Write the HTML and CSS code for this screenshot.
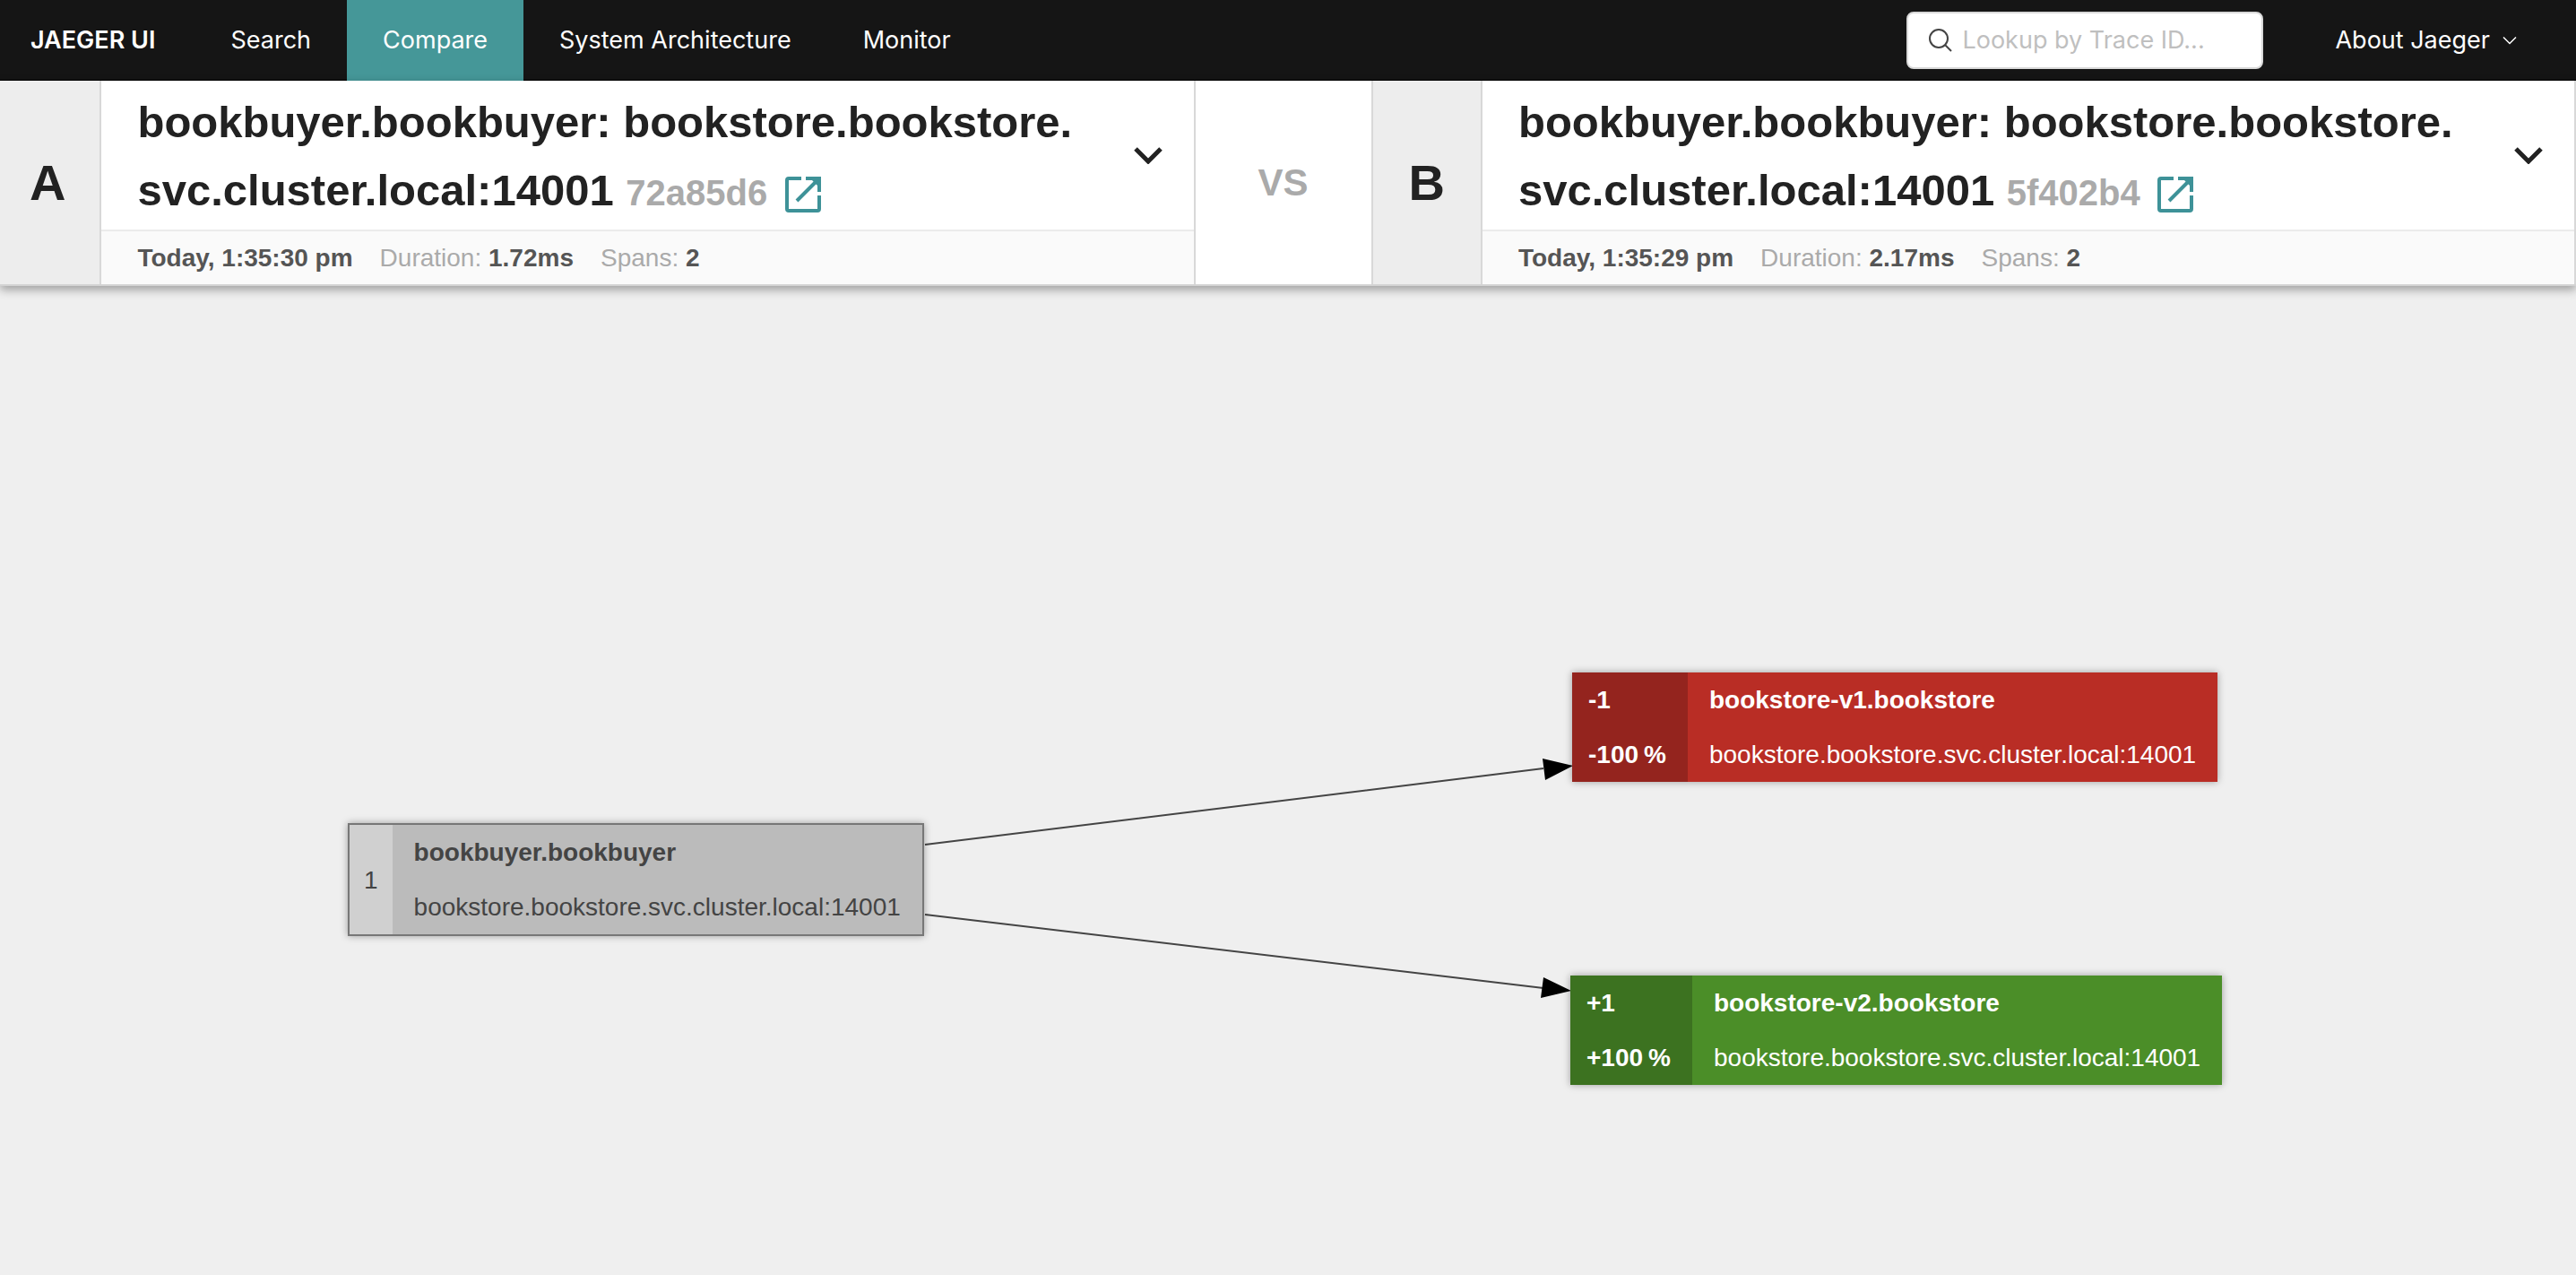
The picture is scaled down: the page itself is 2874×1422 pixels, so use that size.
FILE: index.html
```html
<!DOCTYPE html>
<html lang="en">
<head>
<meta charset="utf-8">
<title>Jaeger UI</title>
<link rel="stylesheet" href="styles.css">
</head>
<body>
<svg class="defs" aria-hidden="true">
  <symbol id="chevron" viewBox="0 0 32 20"><path d="M2 3 16 17 30 3" fill="none" stroke="currentColor"/></symbol>
  <symbol id="open" viewBox="0 0 40 40"><path d="M18 2H4Q2 2 2 4V36Q2 38 4 38H36Q38 38 38 36V21M23 2H38V17M37 3 13 27" fill="none" stroke="currentColor" stroke-width="4"/><path d="M28 2H38V12Z" fill="currentColor"/></symbol>
</svg>
<nav class="nav">
  <a class="nav-item brand" href="#">JAEGER UI</a>
  <a class="nav-item" href="#">Search</a>
  <a class="nav-item active" href="#">Compare</a>
  <a class="nav-item" href="#">System Architecture</a>
  <a class="nav-item" href="#">Monitor</a>
  <label class="lookup">
    <svg class="lookup-icon" viewBox="0 0 28 28" aria-hidden="true"><circle cx="12" cy="12" r="10"/><path d="m19 19 7 7"/></svg>
    <input class="lookup-input" type="text" placeholder="Lookup by Trace ID..." aria-label="Lookup by Trace ID">
  </label>
  <button class="about" type="button">About Jaeger <svg class="about-icon" aria-hidden="true"><use href="#chevron"/></svg></button>
</nav>
<header class="compare">
  <div class="letter">A</div>
  <section class="trace">
    <div class="trace-main">
      <h1 class="title">bookbuyer.bookbuyer: bookstore.bookstore.<wbr>svc.cluster.local:14001 <small class="trace-id">72a85d6</small> <a class="open" href="#" aria-label="Open trace 72a85d6"><svg class="open-icon"><use href="#open"/></svg></a></h1>
      <button class="toggle" type="button" aria-label="Select trace A"><svg class="toggle-icon"><use href="#chevron"/></svg></button>
    </div>
    <div class="meta"><strong>Today, 1:35:30 pm</strong><span>Duration: <strong>1.72ms</strong></span><span>Spans: <strong>2</strong></span></div>
  </section>
  <div class="vs">VS</div>
  <div class="letter letter-b">B</div>
  <section class="trace">
    <div class="trace-main">
      <h1 class="title">bookbuyer.bookbuyer: bookstore.bookstore.<wbr>svc.cluster.local:14001 <small class="trace-id">5f402b4</small> <a class="open" href="#" aria-label="Open trace 5f402b4"><svg class="open-icon"><use href="#open"/></svg></a></h1>
      <button class="toggle" type="button" aria-label="Select trace B"><svg class="toggle-icon"><use href="#chevron"/></svg></button>
    </div>
    <div class="meta"><strong>Today, 1:35:29 pm</strong><span>Duration: <strong>2.17ms</strong></span><span>Spans: <strong>2</strong></span></div>
  </section>
</header>
<main class="graph">
  <svg class="edges" aria-hidden="true">
    <path class="edge" d="M1032 623 1722 538M1032 701 1722 783"/>
    <path d="M1721 527 1755 535 1724 551ZM1722 771 1753 786 1719 794Z"/>
  </svg>
  <div class="node node-same">
    <div class="count"><span>1</span></div>
    <div class="label"><strong>bookbuyer.bookbuyer</strong><span>bookstore.bookstore.svc.cluster.local:14001</span></div>
  </div>
  <div class="node node-removed">
    <div class="count"><span>-1</span><span>-100<span class="pct">%</span></span></div>
    <div class="label"><strong>bookstore-v1.bookstore</strong><span>bookstore.bookstore.svc.cluster.local:14001</span></div>
  </div>
  <div class="node node-added">
    <div class="count"><span>+1</span><span>+100<span class="pct">%</span></span></div>
    <div class="label"><strong>bookstore-v2.bookstore</strong><span>bookstore.bookstore.svc.cluster.local:14001</span></div>
  </div>
</main>
</body>
</html>
```
FILE: styles.css
```css
* { box-sizing: border-box; }
body {
  margin: 0;
  min-height: 100vh;
  display: flex;
  flex-direction: column;
  background: #efefef;
  color: #222;
  font-family: "Liberation Sans", Arial, sans-serif;
  font-size: 28px;
}
button { border: 0; padding: 0; background: none; color: inherit; font: inherit; }
.defs { display: none; }

.nav {
  display: flex;
  align-items: center;
  height: 90px;
  background: #151515;
  border-bottom: 1px solid #000;
  color: #fff;
  font-family: Inter, sans-serif;
  font-size: 27px;
}
.nav-item {
  display: flex;
  align-items: center;
  height: 90px;
  padding: 0 40px;
  color: #fff;
  text-decoration: none;
}
.brand { padding: 0 44px 0 34px; font-weight: 600; }
.active { background: #459798; }
.lookup {
  display: flex;
  align-items: center;
  gap: 10px;
  width: 398px;
  height: 64px;
  margin-left: auto;
  padding: 0 22px;
  background: #fff;
  border: 2px solid #d9d9d9;
  border-radius: 8px;
}
.lookup-icon { flex: none; width: 28px; height: 28px; fill: none; stroke: #444; stroke-width: 2; }
.lookup-input {
  flex: 1;
  min-width: 0;
  border: 0;
  padding: 0;
  outline: 0;
  background: none;
  font: inherit;
}
.lookup-input::placeholder { color: #bfbfbf; }
.about { display: flex; align-items: center; gap: 14px; margin: 0 66px 0 80px; }
.about-icon { width: 16px; height: 10px; stroke-width: 3; }

.compare {
  position: relative;
  display: flex;
  background: #fff;
  border-bottom: 2px solid #d3d3d3;
  box-shadow: 0 4px 10px rgba(0, 0, 0, 0.35);
}
.letter {
  display: flex;
  align-items: center;
  padding: 0 38px 0 33px;
  background: #ededed;
  border-right: 2px solid #d8d8d8;
  font-size: 56px;
  font-weight: 700;
}
.letter-b { padding: 0 40px; border-left: 2px solid #d8d8d8; }
.trace { flex: 1; min-width: 0; border-right: 2px solid #d8d8d8; }
.trace-main { display: flex; align-items: center; height: 168px; border-bottom: 2px solid #ebebeb; }
.title {
  flex: 1;
  margin: 0;
  padding: 4px 0 0 40px;
  font-size: 49px;
  font-weight: 700;
  line-height: 76px;
}
.trace-id { color: #aaa; font-size: 40px; }
.open { margin-left: 6px; color: #3e9298; }
.open-icon { width: 40px; height: 40px; vertical-align: -8px; }
.toggle { padding: 0 34px; }
.toggle-icon { display: block; width: 34px; height: 20px; stroke-width: 5; }
.meta {
  display: flex;
  align-items: center;
  gap: 30px;
  height: 59px;
  padding-left: 40px;
  background: #fafafa;
  color: #aaa;
}
.meta strong { color: #555; }
.vs {
  display: flex;
  align-items: center;
  justify-content: center;
  width: 196px;
  color: #aaa;
  font-size: 42px;
  font-weight: 700;
}

.graph { position: relative; flex: 1; min-height: 1000px; }
.edges { position: absolute; inset: 0; width: 100%; height: 100%; }
.edge { fill: none; stroke: #444; stroke-width: 2; }
.node {
  position: absolute;
  display: flex;
  color: #fff;
  line-height: 61px;
  white-space: nowrap;
  box-shadow: 0 0 8px rgba(0, 0, 0, 0.35);
}
.node span, .node strong { display: block; }
.node .pct { display: inline; margin-left: 6px; }
.count { padding: 0 24px 0 18px; font-weight: 700; }
.label { padding: 0 24px; }
.node-same { left: 388px; top: 599px; color: #444; background: #bbb; border: 2px solid #777; }
.node-same .count { display: flex; align-items: center; padding: 0 16px; background: #d0d0d0; font-weight: 400; }
.node-removed { left: 1754px; top: 431px; background: #b92d25; }
.node-removed .count { background: #94241e; }
.node-added { left: 1752px; top: 769px; background: #4b8e28; }
.node-added .count { background: #3c7220; }
```
